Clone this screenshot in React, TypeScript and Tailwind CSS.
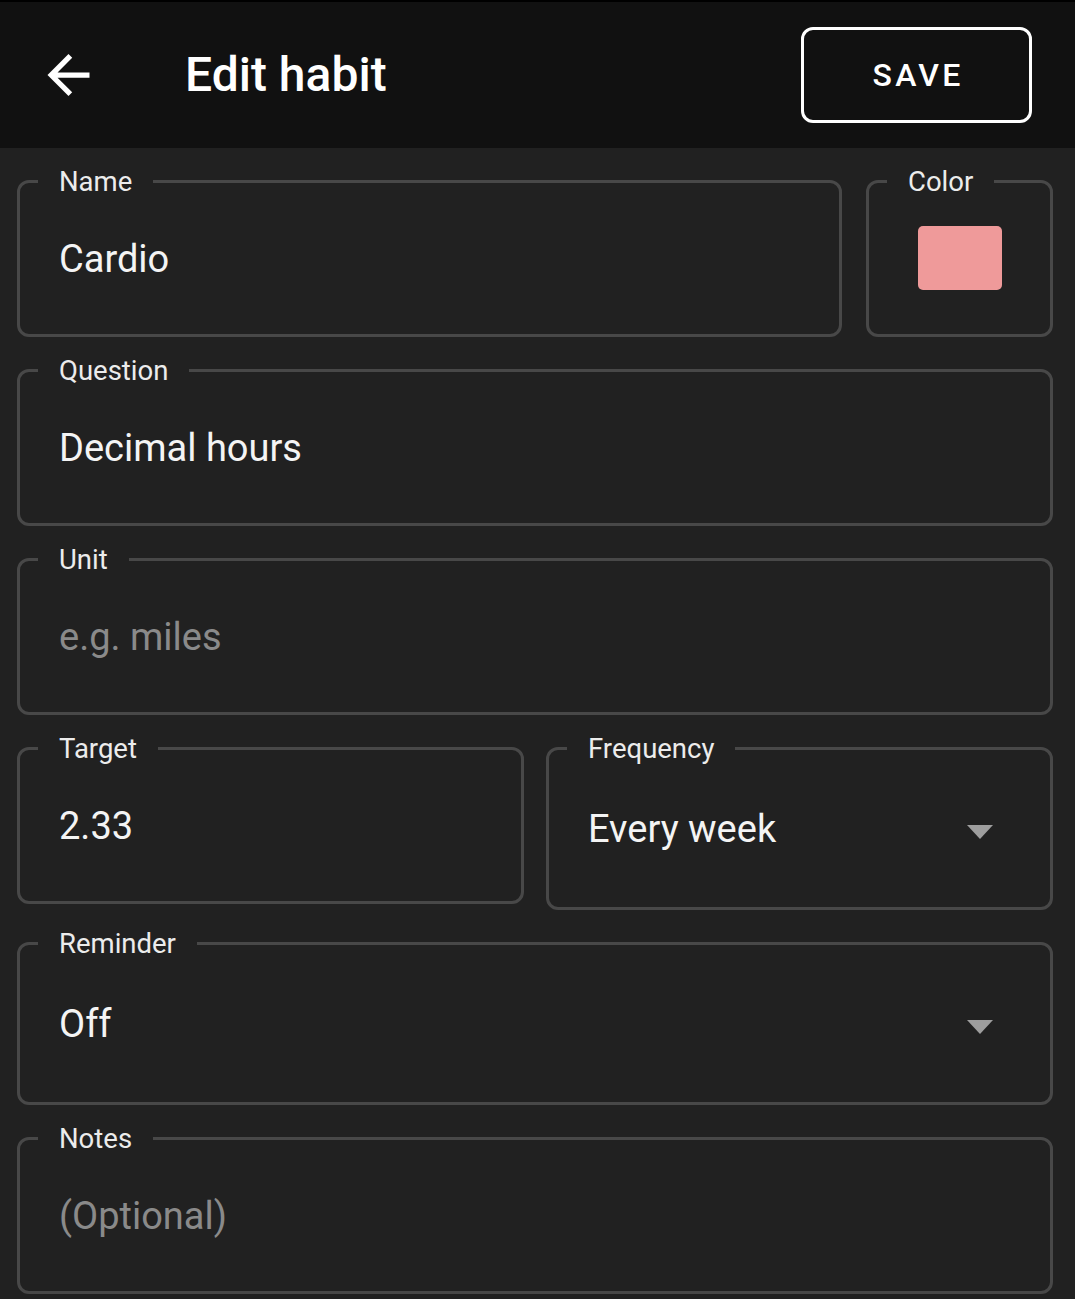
import type { ReactNode } from "react";

function Caret() {
  return (
    <svg width="26" height="14" viewBox="0 0 26 14" className="shrink-0 mt-[6px]">
      <polygon points="0,0 26,0 13,14" fill="#9e9e9e" />
    </svg>
  );
}

function Field({ label, tall, children }: { label: string; tall?: boolean; children: ReactNode }) {
  return (
    <fieldset className="min-w-0 rounded-[12px] border-[3px] border-[#484848]">
      <legend className="ml-[18px] px-[21px] text-[27.5px] leading-[30px] text-[#ececec]">{label}</legend>
      <div
        className={
          tall
            ? "flex h-[143.5px] items-center pb-[12px] pl-[39px] pr-[57px]"
            : "flex h-[137.5px] items-center pb-[12px] pl-[39px] pr-[40px]"
        }
      >
        {children}
      </div>
    </fieldset>
  );
}

function Value({ text, placeholder }: { text: string; placeholder?: boolean }) {
  return (
    <span className={`flex-1 truncate text-[38px] leading-[44px] ${placeholder ? "text-[#8a8a8a]" : "text-[#f4f4f4]"}`}>
      {text}
    </span>
  );
}

export default function App() {
  return (
    <div className="min-h-[1299px] bg-[#212121] font-['Roboto','Liberation_Sans',sans-serif]">
      <header className="flex h-[148px] items-center border-t-2 border-black bg-[#111111] pl-[47px] pr-[43px]">
        <button aria-label="Back" className="shrink-0">
          <svg width="43" height="42" viewBox="4 4 16 16" fill="#ffffff">
            <path d="M20 11H7.83l5.59-5.59L12 4l-8 8 8 8 1.41-1.41L7.83 13H20v-2z" />
          </svg>
        </button>
        <h1 className="ml-[95px] flex-1 text-[48px] font-medium text-white">Edit habit</h1>
        <button className="flex h-[96px] w-[231px] items-center justify-center rounded-[12px] border-[3px] border-white pl-[3px] text-[32px] font-medium tracking-[0.1em] text-white">
          SAVE
        </button>
      </header>

      <main className="flex flex-col gap-[18.5px] pb-[6px] pl-[17px] pr-[22px] pt-[18.5px]">
        <div className="flex items-start gap-[24px]">
          <div className="min-w-0 flex-1">
            <Field label="Name">
              <Value text="Cardio" />
            </Field>
          </div>
          <div className="w-[187px] shrink-0">
            <fieldset className="rounded-[12px] border-[3px] border-[#484848]">
              <legend className="ml-[18px] px-[21px] text-[27.5px] leading-[30px] text-[#ececec]">Color</legend>
              <div className="flex h-[137.5px] items-center justify-center pb-[14px]">
                <div className="h-[64px] w-[84px] rounded-[5px] bg-[#ef9a9a]" />
              </div>
            </fieldset>
          </div>
        </div>

        <Field label="Question">
          <Value text="Decimal hours" />
        </Field>

        <Field label="Unit">
          <Value text="e.g. miles" placeholder />
        </Field>

        <div className="grid grid-cols-2 items-start gap-[22px]">
          <Field label="Target">
            <Value text="2.33" />
          </Field>
          <Field label="Frequency" tall>
            <Value text="Every week" />
            <Caret />
          </Field>
        </div>

        <Field label="Reminder" tall>
          <Value text="Off" />
          <Caret />
        </Field>

        <Field label="Notes">
          <Value text="(Optional)" placeholder />
        </Field>
      </main>
    </div>
  );
}
